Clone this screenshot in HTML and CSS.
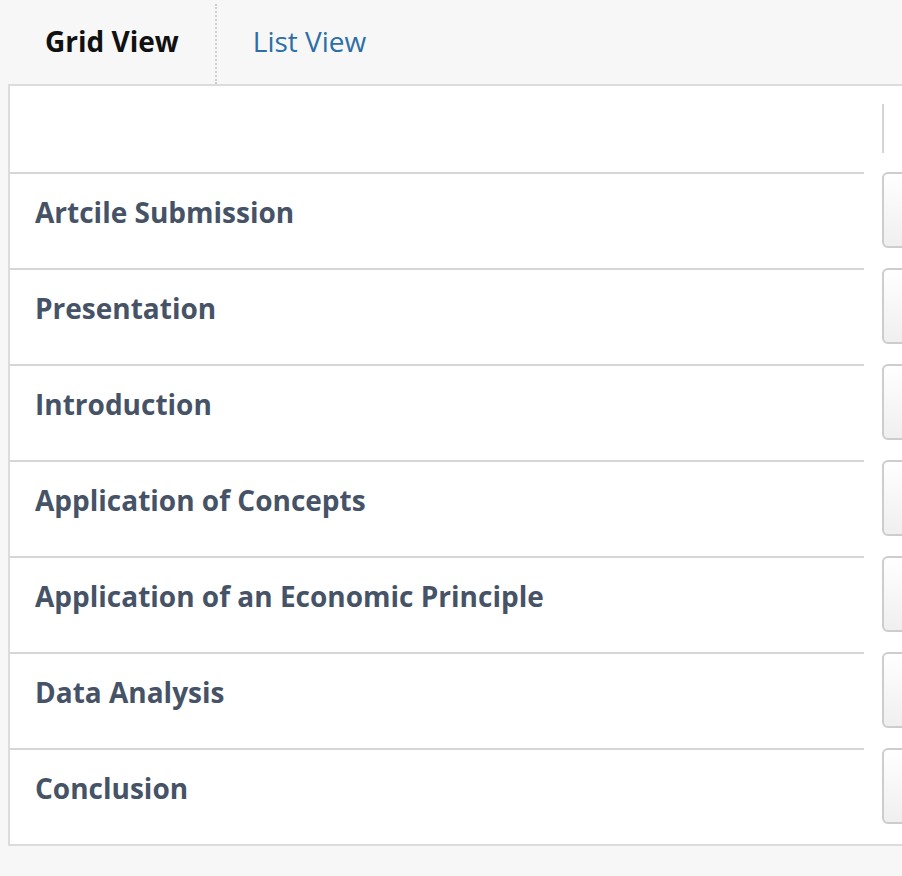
FILE: index.html
```html
<!DOCTYPE html>
<html>
<head>
<meta charset="utf-8">
<link rel="stylesheet" href="styles.css">
</head>
<body>
<div class="tabs">
  <div class="tab active">Grid View</div>
  <div class="tab link">List View</div>
</div>
<div class="panel">
  <div class="row header">
    <div class="cell"></div>
    <div class="side"><div class="vline"></div></div>
  </div>
  <div class="row"><div class="cell">Artcile Submission</div><div class="side"><div class="box"></div></div></div>
  <div class="row"><div class="cell">Presentation</div><div class="side"><div class="box"></div></div></div>
  <div class="row"><div class="cell">Introduction</div><div class="side"><div class="box"></div></div></div>
  <div class="row"><div class="cell">Application of Concepts</div><div class="side"><div class="box"></div></div></div>
  <div class="row"><div class="cell">Application of an Economic Principle</div><div class="side"><div class="box"></div></div></div>
  <div class="row"><div class="cell">Data Analysis</div><div class="side"><div class="box"></div></div></div>
  <div class="row"><div class="cell">Conclusion</div><div class="side"><div class="box"></div></div></div>
</div>
</body>
</html>
```
FILE: styles.css
```css
html, body {
  margin: 0;
  padding: 0;
  background: #f7f7f7;
  overflow: hidden;
  font-family: "Open Sans", "Liberation Sans", sans-serif;
}
.tabs {
  display: flex;
  padding: 4px 0 0 8px;
  height: 80px;
}
.tab {
  font-size: 28px;
  line-height: 38px;
  padding: 18px 36px 0 37px;
}
.tab.active {
  font-weight: 700;
  color: #111;
  border-right: 2px dotted #cfcfcf;
}
.tab.link {
  padding-left: 36px;
  color: #2c6fa6;
}
.panel {
  margin-left: 8px;
  width: 1000px;
  background: #fff;
  border: 2px solid #dcdcdc;
  border-right: none;
}
.row {
  display: flex;
  height: 96px;
}
.row.header {
  height: 86px;
}
.cell {
  width: 854px;
  border-top: 2px solid #d6d6d6;
  padding: 19px 0 0 25px;
  box-sizing: border-box;
  font-size: 28px;
  font-weight: 700;
  line-height: 38px;
  color: #465367;
}
.header .cell {
  border-top: none;
}
.side {
  margin-left: 18px;
  flex: 1;
}
.vline {
  margin-top: 18px;
  width: 2px;
  height: 49px;
  background: #d4d4d4;
}
.box {
  height: 76px;
  box-sizing: border-box;
  border: 2px solid #cdcdcd;
  border-radius: 6px;
  background: linear-gradient(#ffffff, #efefef);
}
```
